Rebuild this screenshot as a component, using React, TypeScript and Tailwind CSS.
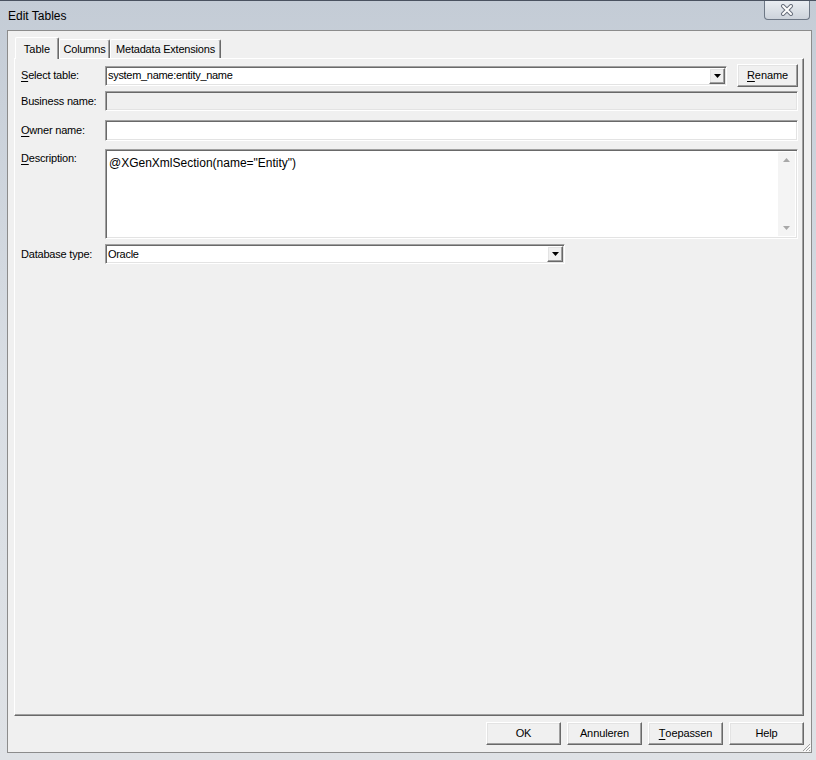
import React from 'react';

const sunken =
  'border border-t-[#a0a0a0] border-l-[#a0a0a0] border-b-white border-r-white shadow-[inset_1px_1px_0_#696969,inset_-1px_-1px_0_#e3e3e3]';
const raised =
  'border border-t-white border-l-white border-b-[#696969] border-r-[#696969] shadow-[inset_-1px_-1px_0_#a0a0a0,inset_1px_1px_0_#e3e3e3]';

const Key: React.FC<{ text: string }> = ({ text }) => (
  <>
    <span className="underline underline-offset-[2px]">{text[0]}</span>
    {text.slice(1)}
  </>
);

const DropArrow = () => (
  <div className={`w-[16px] h-[16px] bg-[#f0f0f0] flex items-center justify-center ${raised}`}>
    <svg width="7" height="4" viewBox="0 0 7 4">
      <path d="M0 0h7L3.5 4z" fill="#000" />
    </svg>
  </div>
);

const Combo: React.FC<{ value: string; width: string }> = ({ value, width }) => (
  <div className={`${width} h-[20px] bg-white flex items-center justify-between pl-[2px] pr-[1px] ${sunken}`}>
    <span className="text-[11px] leading-none tracking-[-0.3px]">{value}</span>
    <DropArrow />
  </div>
);

const Label: React.FC<{ children: React.ReactNode; top?: boolean }> = ({ children, top }) => (
  <div className={`w-[84px] shrink-0 text-[11px] leading-[13px] tracking-[-0.2px] ${top ? 'self-start pt-[3px]' : ''}`}>
    {children}
  </div>
);

const Button: React.FC<{ children: React.ReactNode; w?: string }> = ({ children, w = 'w-[75px]' }) => (
  <div className={`${w} h-[23px] flex items-center justify-center bg-[#f0f0f0] text-[11px] tracking-[-0.1px] ${raised}`}>
    {children}
  </div>
);

export default function App() {
  return (
    <div
      className="w-[816px] h-[760px] overflow-hidden flex flex-col bg-gradient-to-b from-[#c4ccd6] via-[#d9dee4] to-[#dfe2e6] border-t border-[#4a5260] text-black"
      style={{ fontFamily: '"Liberation Sans", Arial, sans-serif' }}
    >
      {/* title bar */}
      <div className="h-[29px] flex items-start justify-between">
        <div className="pl-[8px] pt-[8px] text-[12px] leading-[14px] text-black">Edit Tables</div>
        <div className="mr-[6px] w-[46px] h-[19px] rounded-b-[4px] border border-t-0 border-[#6d7785] bg-gradient-to-b from-[#e9edf2] to-[#cdd3db] flex items-center justify-center">
          <svg width="14" height="12" viewBox="0 0 14 12">
            <path d="M3 2l8 8M11 2l-8 8" stroke="#6a717e" strokeWidth="4" strokeLinecap="round" />
            <path d="M3 2l8 8M11 2l-8 8" stroke="#ffffff" strokeWidth="2" strokeLinecap="round" />
          </svg>
        </div>
      </div>

      {/* client area */}
      <div className="relative ml-[7px] mr-[4px] h-[723px] border border-[#8c8c8c] bg-[#f0f0f0] flex flex-col pl-[6px] pr-[7px]">
        {/* tabs */}
        <div className="mt-[6px] h-[21px] flex items-end pl-[1px] text-[11px] relative z-10">
          <div className="w-[44px] h-[22px] -mb-px bg-[#f0f0f0] border border-b-0 border-t-white border-l-white border-r-[#696969] rounded-t-[2px] shadow-[inset_-1px_0_0_#a0a0a0] flex items-start justify-center pt-[3px]">
            Table
          </div>
          <div className="w-[51px] h-[19px] bg-[#f0f0f0] border border-b-0 border-t-white border-l-white border-r-[#696969] rounded-t-[2px] shadow-[inset_-1px_0_0_#a0a0a0] flex items-center justify-center tracking-[-0.2px]">
            Columns
          </div>
          <div className="w-[111px] h-[19px] bg-[#f0f0f0] border border-b-0 border-t-white border-l-white border-r-[#696969] rounded-t-[2px] shadow-[inset_-1px_0_0_#a0a0a0] flex items-center justify-center tracking-[-0.2px]">
            Metadata Extensions
          </div>
        </div>

        {/* tab panel */}
        <div className="h-[658px] border border-t-white border-l-white border-b-[#696969] border-r-[#696969] shadow-[inset_-1px_-1px_0_#a0a0a0] flex flex-col pl-[6px] pr-[5px]">
          <div className="mt-[6px] h-[21px] flex items-center">
            <Label>
              <Key text="Select table:" />
            </Label>
            <Combo value="system_name:entity_name" width="w-[622px]" />
            <div className="ml-[10px]">
              <Button w="w-[61px]">
                <Key text="Rename" />
              </Button>
            </div>
          </div>

          <div className="mt-[5px] h-[20px] flex items-center">
            <Label>Business name:</Label>
            <div className={`flex-1 h-[20px] bg-[#f0f0f0] ${sunken}`} />
          </div>

          <div className="mt-[9px] h-[21px] flex items-center">
            <Label>
              <Key text="Owner name:" />
            </Label>
            <div className={`flex-1 h-[21px] bg-white ${sunken}`} />
          </div>

          <div className="mt-[8px] h-[90px] flex">
            <Label top>
              <Key text="Description:" />
            </Label>
            <div className={`flex-1 h-[90px] bg-white flex ${sunken} p-[2px]`}>
              <div className="flex-1 pl-[1px] pt-[4px] text-[12px] leading-[14px]">@XGenXmlSection(name="Entity")</div>
              <div className="w-[17px] bg-[#f4f4f4] flex flex-col items-center justify-between py-[6px]">
                <svg width="7" height="4" viewBox="0 0 7 4">
                  <path d="M3.5 0L7 4H0z" fill="#a8a8a8" />
                </svg>
                <svg width="7" height="4" viewBox="0 0 7 4">
                  <path d="M0 0h7L3.5 4z" fill="#a8a8a8" />
                </svg>
              </div>
            </div>
          </div>

          <div className="mt-[5px] h-[20px] flex items-center">
            <Label>Database type:</Label>
            <Combo value="Oracle" width="w-[460px]" />
          </div>
        </div>

        {/* buttons */}
        <div className="mt-[6px] flex justify-end gap-[6px]">
          <Button>OK</Button>
          <Button>Annuleren</Button>
          <Button>
            <Key text="Toepassen" />
          </Button>
          <Button>Help</Button>
        </div>

        {/* resize grip */}
        <svg className="absolute right-0 bottom-0" width="10" height="10" viewBox="0 0 10 10">
          <path d="M9 2L2 9M9 5L5 9M9 8L8 9" stroke="#a0a0a0" strokeWidth="1" />
          <path d="M10 3L3 10M10 6L6 10" stroke="#ffffff" strokeWidth="1" />
        </svg>
      </div>
    </div>
  );
}
